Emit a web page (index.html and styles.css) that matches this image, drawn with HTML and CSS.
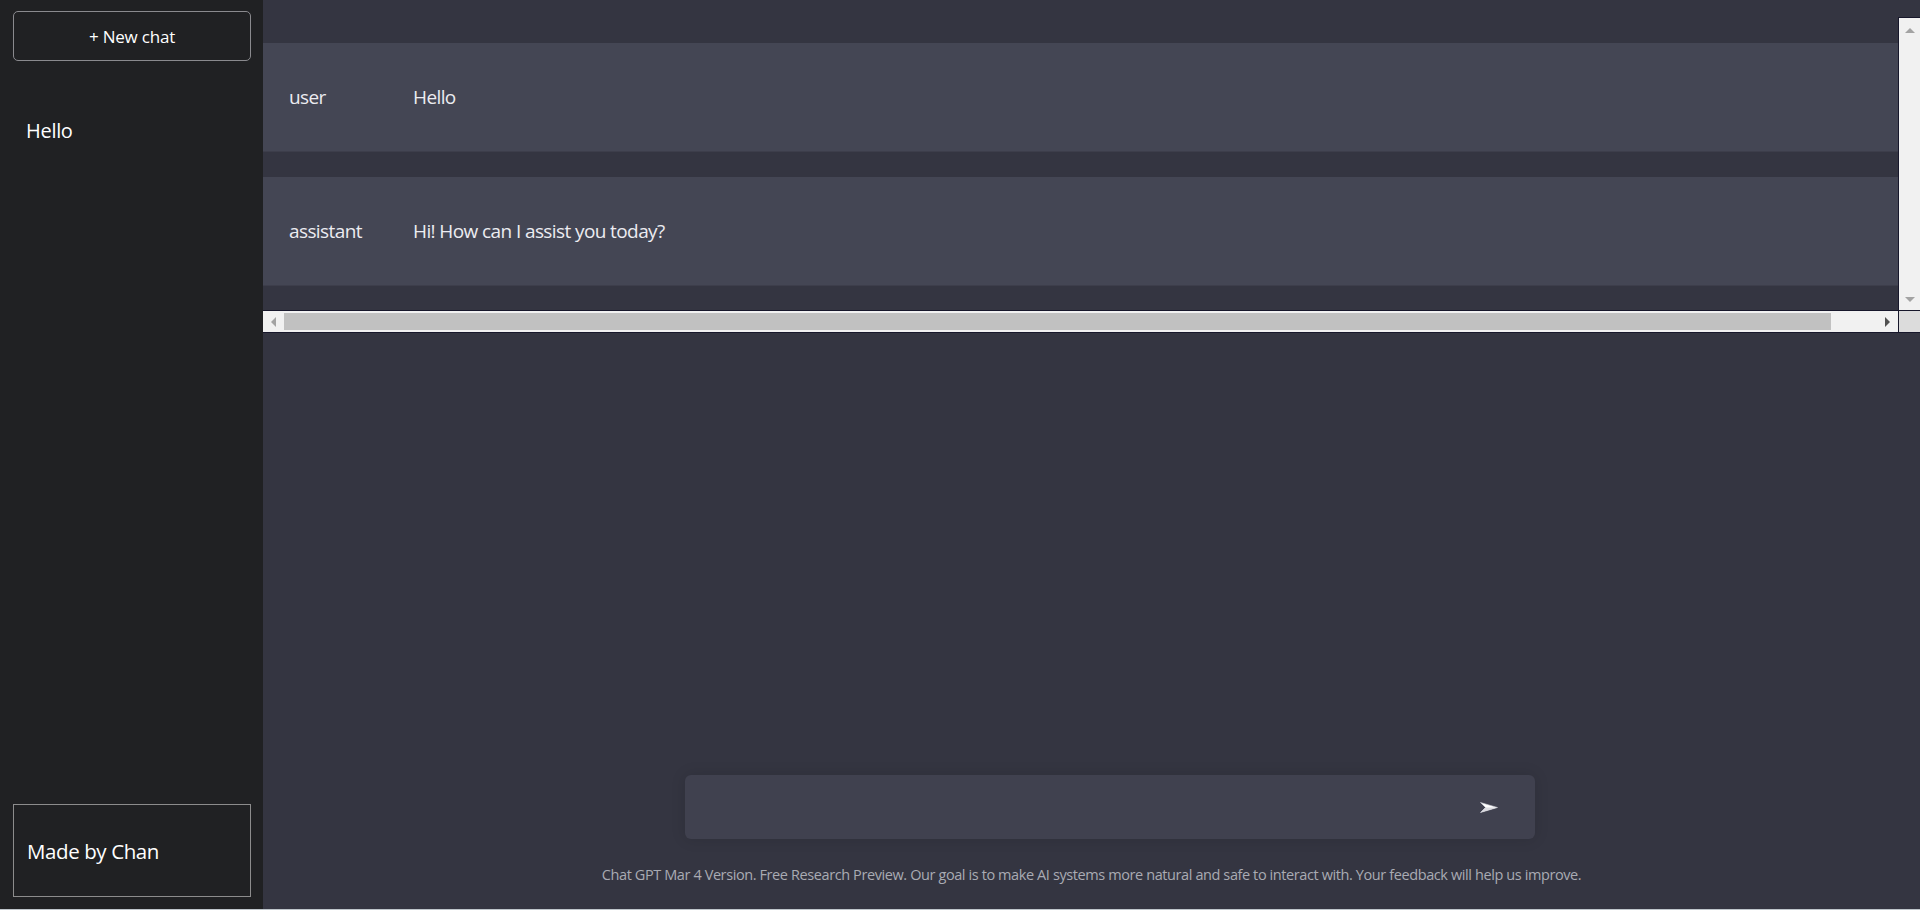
FILE: index.html
```html
<!DOCTYPE html>
<html lang="en">
<head>
<meta charset="utf-8">
<title>Chat GPT</title>
<link rel="stylesheet" href="styles.css">
</head>
<body>
<div class="app">
  <aside class="sidebar">
    <button class="new-chat">+ New chat</button>
    <ul class="history">
      <li>Hello</li>
    </ul>
    <div class="credit">Made by Chan</div>
  </aside>
  <main class="main">
    <section class="chat-frame">
      <div class="chat-view">
        <div class="chat-content">
          <div class="msg"><span class="role">user</span><span class="text">Hello</span></div>
          <div class="msg"><span class="role">assistant</span><span class="text">Hi! How can I assist you today?</span></div>
        </div>
      </div>
      <div class="vscroll">
        <span class="arrow-up"></span>
        <span class="arrow-down"></span>
      </div>
      <div class="hscroll">
        <span class="hbtn"><span class="arrow-left"></span></span>
        <span class="hthumb"></span>
        <span class="htrack"></span>
        <span class="hbtn"><span class="arrow-right"></span></span>
      </div>
      <div class="corner"></div>
    </section>
    <div class="spacer"></div>
    <div class="composer">
      <div class="input-box">
        <textarea class="prompt" rows="1"></textarea>
        <button class="send" aria-label="Send">
          <svg width="18" height="11" viewBox="0 0 18 11">
            <path d="M0.5 0.5 L17.5 5.5 L0.5 10.5 L5.5 5.5 Z" fill="#ffffff" stroke="#c8c8d0" stroke-width="0.6" stroke-linejoin="round"/>
            <path d="M5.5 5.5 L17.5 5.5 L0.5 10.5 Z" fill="#dadae0"/>
          </svg>
        </button>
      </div>
    </div>
    <p class="footer">Chat GPT Mar 4 Version. Free Research Preview. Our goal is to make AI systems more natural and safe to interact with. Your feedback will help us improve.</p>
  </main>
</div>
</body>
</html>
```

FILE: styles.css
```css
* { box-sizing: border-box; }

html, body {
  margin: 0;
  padding: 0;
}

body {
  background: #bfc6cb;
  font-family: "Segoe UI", "Open Sans", "Noto Sans", sans-serif;
  color: #ececf1;
  overflow: hidden;
}

.app {
  display: flex;
  height: 909px;
  width: 1920px;
}

/* Sidebar */
.sidebar {
  width: 263px;
  flex: none;
  background: #202123;
  display: flex;
  flex-direction: column;
  padding: 11px 12px 12px 13px;
}

.new-chat {
  height: 50px;
  width: 238px;
  background: transparent;
  border: 1px solid #8a8a8e;
  border-radius: 5px;
  color: #ffffff;
  font-family: inherit;
  font-size: 17px;
  letter-spacing: -0.2px;
  cursor: pointer;
}

.history {
  list-style: none;
  margin: 56px 0 0;
  padding: 0 0 0 13px;
  flex: 1;
}

.history li {
  font-size: 20px;
  line-height: 28px;
  letter-spacing: -0.3px;
  color: #ffffff;
}

.credit {
  height: 93px;
  width: 238px;
  border: 1px solid #8c8c8c;
  display: flex;
  align-items: center;
  padding-left: 13px;
  font-size: 20.5px;
  letter-spacing: -0.4px;
  color: #ffffff;
}

/* Main */
.main {
  flex: 1;
  background: #343541;
  display: flex;
  flex-direction: column;
  min-width: 0;
}

.chat-frame {
  margin-top: 17px;
  display: grid;
  grid-template-columns: 1fr 21px;
  grid-template-rows: 293px 21px;
  column-gap: 1px;
  row-gap: 1px;
  padding-bottom: 1px;
  background: #17172b;
}

.chat-view {
  background: #343541;
  overflow: hidden;
}

.chat-content {
  padding-top: 26px;
  display: flex;
  flex-direction: column;
  gap: 25px;
}

.msg {
  height: 109px;
  background: #444654;
  display: flex;
  align-items: center;
  border-bottom: 1px solid #3d3e4b;
  font-size: 19px;
  letter-spacing: -0.6px;
  color: #ececf1;
}

.role {
  width: 150px;
  padding-left: 26px;
  flex: none;
}

/* fake scrollbars */
.vscroll {
  margin-top: 1px;
  background: #f1f1f1;
  display: flex;
  flex-direction: column;
  justify-content: space-between;
  align-items: center;
  padding: 10px 0 8px;
}

.arrow-up {
  width: 0;
  height: 0;
  border-left: 5px solid transparent;
  border-right: 5px solid transparent;
  border-bottom: 5px solid #a3a3a3;
}

.arrow-down {
  width: 0;
  height: 0;
  border-left: 5px solid transparent;
  border-right: 5px solid transparent;
  border-top: 5px solid #a3a3a3;
}

.hscroll {
  background: #f1f1f1;
  display: flex;
  align-items: stretch;
}

.hbtn {
  width: 21px;
  flex: none;
  display: flex;
  align-items: center;
  justify-content: center;
}

.arrow-left {
  width: 0;
  height: 0;
  border-top: 5px solid transparent;
  border-bottom: 5px solid transparent;
  border-right: 5px solid #a3a3a3;
}

.arrow-right {
  width: 0;
  height: 0;
  border-top: 5px solid transparent;
  border-bottom: 5px solid transparent;
  border-left: 5px solid #505050;
}

.hthumb {
  width: 1547px;
  flex: none;
  margin: 2px 0;
  background: #c1c1c1;
}

.htrack { flex: 1; }

.corner {
  background: #dcdcdc;
}

.spacer { flex: 1; }

/* Composer */
.composer {
  display: flex;
  justify-content: center;
  padding-left: 37px;
}

.input-box {
  width: 850px;
  height: 64px;
  background: #40414f;
  border-radius: 6px;
  box-shadow: 0 0 15px rgba(0, 0, 0, 0.12);
  display: flex;
  align-items: center;
  padding: 0 37px 0 16px;
}

.prompt {
  flex: 1;
  background: transparent;
  border: none;
  outline: none;
  resize: none;
  color: #ffffff;
  font-family: inherit;
  font-size: 17px;
}

.send {
  background: transparent;
  border: none;
  padding: 0;
  width: 18px;
  height: 11px;
  display: flex;
  cursor: pointer;
}

.footer {
  margin: 26px 0 24px;
  text-align: center;
  font-size: 14.5px;
  letter-spacing: -0.4px;
  line-height: 20px;
  color: #a9abb3;
}
```
